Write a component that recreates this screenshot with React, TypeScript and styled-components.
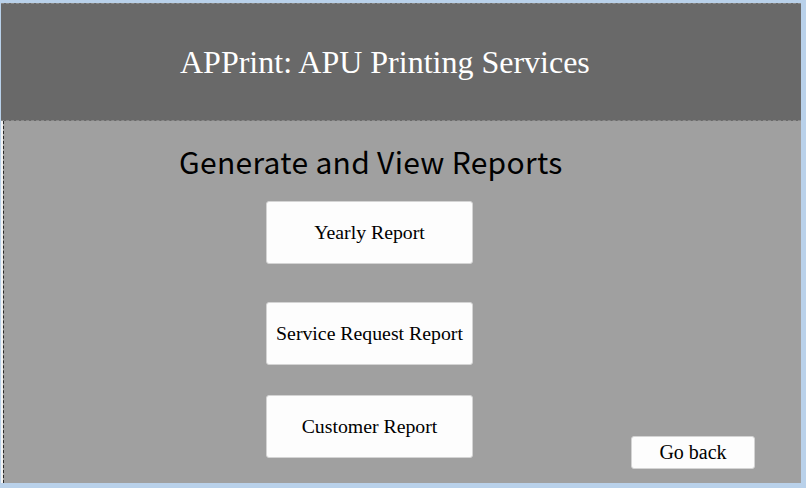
import React from "react";
import styled, { createGlobalStyle } from "styled-components";

const GlobalStyle = createGlobalStyle`
  html, body {
    margin: 0;
    padding: 0;
    background: #b9d1ea;
  }
  body {
    font-family: "Liberation Serif", serif;
  }
`;

const Frame = styled.div`
  margin: 3px 0 0 1px;
  width: 800px;
  height: 480px;
  display: flex;
  flex-direction: column;
`;

const Header = styled.header`
  height: 116px;
  display: flex;
  align-items: center;
  padding-left: 179px;
  background: #696969;
  border-top: 1px dashed #8a8a8a;
  border-bottom: 1px dashed #8a8a8a;
`;

const Title = styled.h1`
  margin: 0;
  font-family: "Liberation Serif", serif;
  font-weight: normal;
  font-size: 32px;
  color: #ffffff;
`;

const ContentArea = styled.main`
  flex: 1;
  display: flex;
  border-left: 2px solid #f2f2f2;
`;

const Panel = styled.div`
  flex: 1;
  display: flex;
  flex-direction: column;
  background: #a0a0a0;
  border-left: 1px dashed #2a2a2a;
  padding-top: 22px;
`;

const Heading = styled.h2`
  margin: 0 0 0 175px;
  font-family: "Noto Sans CJK JP", "Noto Sans", sans-serif;
  font-weight: normal;
  font-size: 30px;
  line-height: 36px;
  letter-spacing: 0.3px;
  color: #000000;
`;

const ReportButton = styled.button<{ $mt: number }>`
  margin: ${(p) => p.$mt}px 0 0 262px;
  width: 207px;
  height: 63px;
  background: #fdfdfd;
  border: 1px solid #d4d4d4;
  border-radius: 3px;
  font-family: "Liberation Serif", serif;
  font-size: 19.8px;
  color: #000000;
  cursor: pointer;
`;

const BottomRow = styled.div`
  display: flex;
  align-items: flex-start;
`;

const BackButton = styled.button`
  margin: 71px 46px 0 auto;
  width: 124px;
  height: 33px;
  background: #fdfdfd;
  border: 1px solid #d4d4d4;
  border-radius: 3px;
  font-family: "Liberation Serif", serif;
  font-size: 20px;
  color: #000000;
  cursor: pointer;
`;

export default function App() {
  return (
    <>
      <GlobalStyle />
      <Frame>
        <Header>
          <Title>APPrint: APU Printing Services</Title>
        </Header>
        <ContentArea>
          <Panel>
            <Heading>Generate and View Reports</Heading>
            <ReportButton $mt={22}>Yearly Report</ReportButton>
            <ReportButton $mt={38}>Service Request Report</ReportButton>
            <BottomRow>
              <ReportButton $mt={30}>Customer Report</ReportButton>
              <BackButton>Go back</BackButton>
            </BottomRow>
          </Panel>
        </ContentArea>
      </Frame>
    </>
  );
}
